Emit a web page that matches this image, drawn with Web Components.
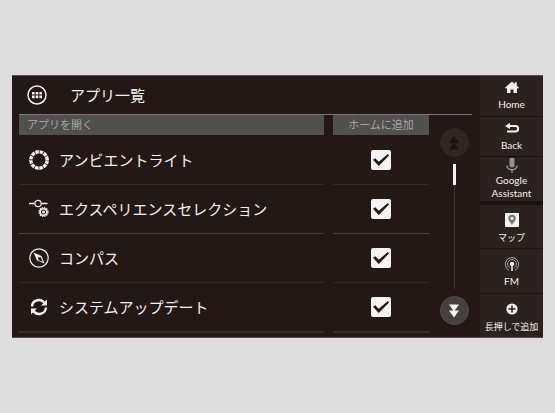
<!DOCTYPE html>
<html lang="ja">
<head>
  <meta charset="utf-8">
  <meta name="viewport" content="width=device-width, initial-scale=1">
  <title>アプリ一覧</title>
  <style>
    body {
      margin: 0;
      min-height: 100vh;
      display: flex;
      align-items: center;
      background: #dddddd;
      color: #f0f1ef;
      font-family: Lato, "Noto Sans CJK JP", sans-serif;
    }

    car-display {
      flex: 1;
      margin: 0 12px;
    }
  </style>
</head>
<body>
  <car-display>
    <app-list heading="アプリ一覧">
      <app-row icon="light">アンビエントライト</app-row>
      <app-row icon="slider">エクスペリエンスセレクション</app-row>
      <app-row icon="compass">コンパス</app-row>
      <app-row icon="update">システムアップデート</app-row>
    </app-list>
    <side-button slot="side" icon="home">Home</side-button>
    <side-button slot="side" icon="back">Back</side-button>
    <side-button slot="side" icon="mic">Google Assistant</side-button>
    <side-button slot="side" icon="map" class="large first">マップ</side-button>
    <side-button slot="side" icon="radio" class="large">FM</side-button>
    <side-button slot="side" icon="add" class="large">長押しで追加</side-button>
  </car-display>

  <script>
    const icons = {
      apps: `<circle cx="11" cy="11" r="9" fill="none" stroke="currentColor" stroke-width="1.5"/>
        <path fill="currentColor" d="M6 8h2.6v2.6H6zM9.7 8h2.6v2.6H9.7zM13.4 8H16v2.6h-2.6zM6 11.6h2.6v2.6H6zM9.7 11.6h2.6v2.6H9.7zM13.4 11.6H16v2.6h-2.6z"/>`,
      light: `<circle cx="11" cy="11" r="8.2" fill="none" stroke="currentColor" stroke-width="3.4" stroke-dasharray="3.5 .793" stroke-dashoffset="-.4"/>`,
      slider: `<g fill="none" stroke="currentColor">
          <path stroke-width="1.6" d="M1 5.500h5.500M13.500 5.500H19.500"/>
          <circle cx="10" cy="5.500" r="3.200" stroke-width="1.200"/>
          <circle cx="15.500" cy="14" r="4.400" stroke-width="1.400" stroke-dasharray="1.400 .904"/>
          <circle cx="15.500" cy="14" r="3.300" stroke-width="1.600"/>
        </g>
        <circle cx="15.500" cy="14" r="1.500" fill="currentColor"/>`,
      compass: `<circle cx="11" cy="11" r="9.200" fill="none" stroke="currentColor" stroke-width="1.200"/>
        <path fill="currentColor" fill-rule="evenodd" d="M5.500 5.500 13.500 9 16.500 16.500 9 13.500zM12.700 10l-2.900 2.900 4.900 1.900z"/>
        <circle cx="11" cy="11" r="1" fill="#231816"/>`,
      update: `<g fill="none" stroke="currentColor" stroke-width="2.400">
          <path d="M4 10.500C4.500 3.500 13 2 16.500 7"/>
          <path d="M18 11.500C17.500 18.500 9 20 5.500 15"/>
        </g>
        <path fill="currentColor" d="M19 3.500v6h-6zM3 18.500v-6h6z"/>`,
      home: `<path fill="currentColor" d="M8 1.500 10.800 4V2.200h2v3.600L15 7.700l-.9 1.100L13 8v5H9.500V9.500h-3V13H3V8L1.900 8.800 1 7.700z"/>`,
      back: `<path fill="none" stroke="currentColor" stroke-width="2" d="M4 5h7.400a2.750 2.750 0 0 1 0 5.500H3"/>
        <path fill="currentColor" d="M1 5 6 2v6z"/>`,
      mic: `<g transform="translate(0 -1)">
          <rect x="5.500" y="0" width="5" height="10.500" rx="2.500" fill="#929090"/>
          <path fill="none" stroke="#929090" stroke-width="1.400" d="M3 8.500c0 5.500 10 5.500 10 0M8 12.500V16"/>
        </g>`,
      map: `<rect x="1" y="1" width="14" height="14" rx="1" fill="#f3f3f1"/>
        <path fill="#77716d" fill-rule="evenodd" d="M8 2.700a3.700 3.700 0 0 1 3.700 3.700C11.700 9 9 10 8 13.300 7 10 4.300 9 4.300 6.400A3.700 3.700 0 0 1 8 2.700zm0 2a1.700 1.700 0 1 0 0 3.400 1.700 1.700 0 0 0 0-3.400z"/>`,
      radio: `<g fill="none" stroke="#aaa7a5">
          <path d="M5 14.200a6.700 6.700 0 1 1 6 0"/>
          <path d="M5.500 11.800a4.500 4.500 0 1 1 5 0"/>
        </g>
        <circle cx="8" cy="8" r="2.200" fill="currentColor"/>
        <path stroke="currentColor" stroke-width="1.500" d="M8 8v7"/>`,
      add: `<circle cx="8" cy="8" r="5.600" fill="currentColor"/>
        <path stroke="#2b2220" stroke-width="1.600" d="M8 4.500v7M4.500 8h7"/>`,
      up: `<path fill="currentColor" d="M8 1l5 7H3zM8 7.500l5 7H3z"/>`,
      down: `<path fill="currentColor" d="M3 1.500h10l-5 7zM3 7.500h10l-5 7z"/>`
    }

    const svg = (name, size) =>
      `<svg width="${size}" height="${size}" viewBox="0 0 ${size} ${size}" aria-hidden="true">${icons[name]}</svg>`

    class BaseElement extends HTMLElement {
      constructor() {
        super()
        this.attachShadow({ mode: 'open' })
      }

      connectedCallback() {
        this.shadowRoot.innerHTML = this.template
      }
    }

    class CarDisplay extends BaseElement {
      get template() {
        return `
          <style>
            :host {
              display: grid;
              grid-template-columns: 1fr 63px;
              box-sizing: border-box;
              border-top: 1px solid #555251;
              border-bottom: 1px solid #555251;
              background: #231816;
            }

            nav {
              display: flex;
              flex-direction: column;
              gap: 1px;
              background: #1c1210;
            }
          </style>
          <slot></slot>
          <nav><slot name="side"></slot></nav>
        `
      }
    }

    class SideButton extends BaseElement {
      get template() {
        return `
          <style>
            :host {
              display: block;
              flex: 1 0 39px;
            }

            :host(.large), :host([icon="mic"]) {
              flex-basis: 43px;
            }

            :host(.first) {
              margin-top: 3px;
            }

            button {
              display: flex;
              flex-direction: column;
              align-items: center;
              justify-content: center;
              gap: 2px;
              width: 100%;
              height: 100%;
              padding: 0;
              border: none;
              background: #2b2220;
              color: inherit;
              font: 10px/13px Lato, "Noto Sans CJK JP", sans-serif;
              cursor: pointer;
            }

            :host([icon="mic"]) button {
              gap: 0;
            }

            :host(.large) button {
              gap: 3px;
              padding-top: 3px;
            }

            :host(.large:not([icon="radio"])) button {
              font-size: 9px;
            }

            svg {
              flex: none;
            }
          </style>
          <button type="button">
            ${svg(this.getAttribute('icon'), 16)}
            <span><slot></slot></span>
          </button>
        `
      }
    }

    class AppList extends BaseElement {
      get template() {
        return `
          <style>
            :host {
              display: block;
              padding: 0 8px 4px 7px;
            }

            header {
              display: flex;
              align-items: center;
              gap: 22px;
              height: 38px;
              padding-left: 7px;
              border-bottom: 1px solid #77797a;
            }

            h1 {
              margin: 0;
              font-size: 15px;
              line-height: 20px;
              font-weight: 400;
            }

            .content {
              display: grid;
              grid-template-columns: 1fr 43px;
            }

            .columns {
              display: grid;
              grid-template-columns: 1fr 96px;
              gap: 9px;
              padding-bottom: 1px;
              font-size: 11px;
              line-height: 20px;
              color: #a5a5a3;
            }

            .columns span {
              padding: 0 8px;
              background: #50504f;
            }

            .columns span:last-child {
              text-align: center;
            }
          </style>
          <header>
            ${svg('apps', 22)}
            <h1>${this.getAttribute('heading')}</h1>
          </header>
          <div class="content">
            <div>
              <div class="columns">
                <span>アプリを開く</span>
                <span>ホームに追加</span>
              </div>
              <slot></slot>
            </div>
            <page-scroller></page-scroller>
          </div>
        `
      }
    }

    class AppRow extends BaseElement {
      get template() {
        return `
          <style>
            :host {
              display: grid;
              grid-template-columns: 1fr 96px;
              column-gap: 9px;
            }

            label, .check {
              display: flex;
              align-items: center;
              height: 48px;
              border-bottom: 1px solid #342a29;
            }

            :host(:nth-child(even)) label, :host(:nth-child(even)) .check {
              border-bottom-color: #453d3c;
            }

            :host(:last-child) label, :host(:last-child) .check {
              border-bottom: 2px solid #342b2a;
            }

            label {
              gap: 9px;
              padding-left: 9px;
              font-size: 15px;
              line-height: 20px;
              white-space: nowrap;
            }

            .check {
              justify-content: center;
            }

            input {
              appearance: none;
              display: grid;
              place-items: center;
              width: 20px;
              height: 20px;
              margin: 0;
              border-radius: 2px;
              background: #f3f3f1;
              cursor: pointer;
            }

            input:checked::before {
              content: "";
              width: 16px;
              height: 12px;
              background: #231816;
              clip-path: polygon(0 48%, 14% 35%, 36% 64%, 93% 0, 100% 12%, 36% 100%);
            }
          </style>
          <label for="add">${svg(this.getAttribute('icon'), 22)}<span><slot></slot></span></label>
          <div class="check"><input id="add" type="checkbox" checked></div>
        `
      }
    }

    class PageScroller extends BaseElement {
      get template() {
        return `
          <style>
            :host {
              display: flex;
              flex-direction: column;
              align-items: center;
              gap: 7px;
              padding: 13px 0 8px 7px;
            }

            button {
              display: grid;
              place-items: center;
              width: 29px;
              height: 29px;
              padding: 0;
              border: 1px solid #524e4c;
              border-radius: 50%;
              background: #454140;
              color: #f3f3f1;
            }

            button:disabled {
              border-color: #302725;
              background: #302725;
              color: #1b1210;
            }

            .track {
              display: flex;
              justify-content: center;
              flex: 1;
              width: 1px;
              background: #413a38;
            }

            .thumb {
              flex: none;
              width: 3px;
              height: 21px;
              background: #f3f3f1;
            }
          </style>
          <button type="button" aria-label="前のページ" disabled>${svg('up', 16)}</button>
          <div class="track"><div class="thumb"></div></div>
          <button type="button" aria-label="次のページ">${svg('down', 16)}</button>
        `
      }
    }

    customElements.define('page-scroller', PageScroller)
    customElements.define('app-row', AppRow)
    customElements.define('app-list', AppList)
    customElements.define('side-button', SideButton)
    customElements.define('car-display', CarDisplay)
  </script>
</body>
</html>
